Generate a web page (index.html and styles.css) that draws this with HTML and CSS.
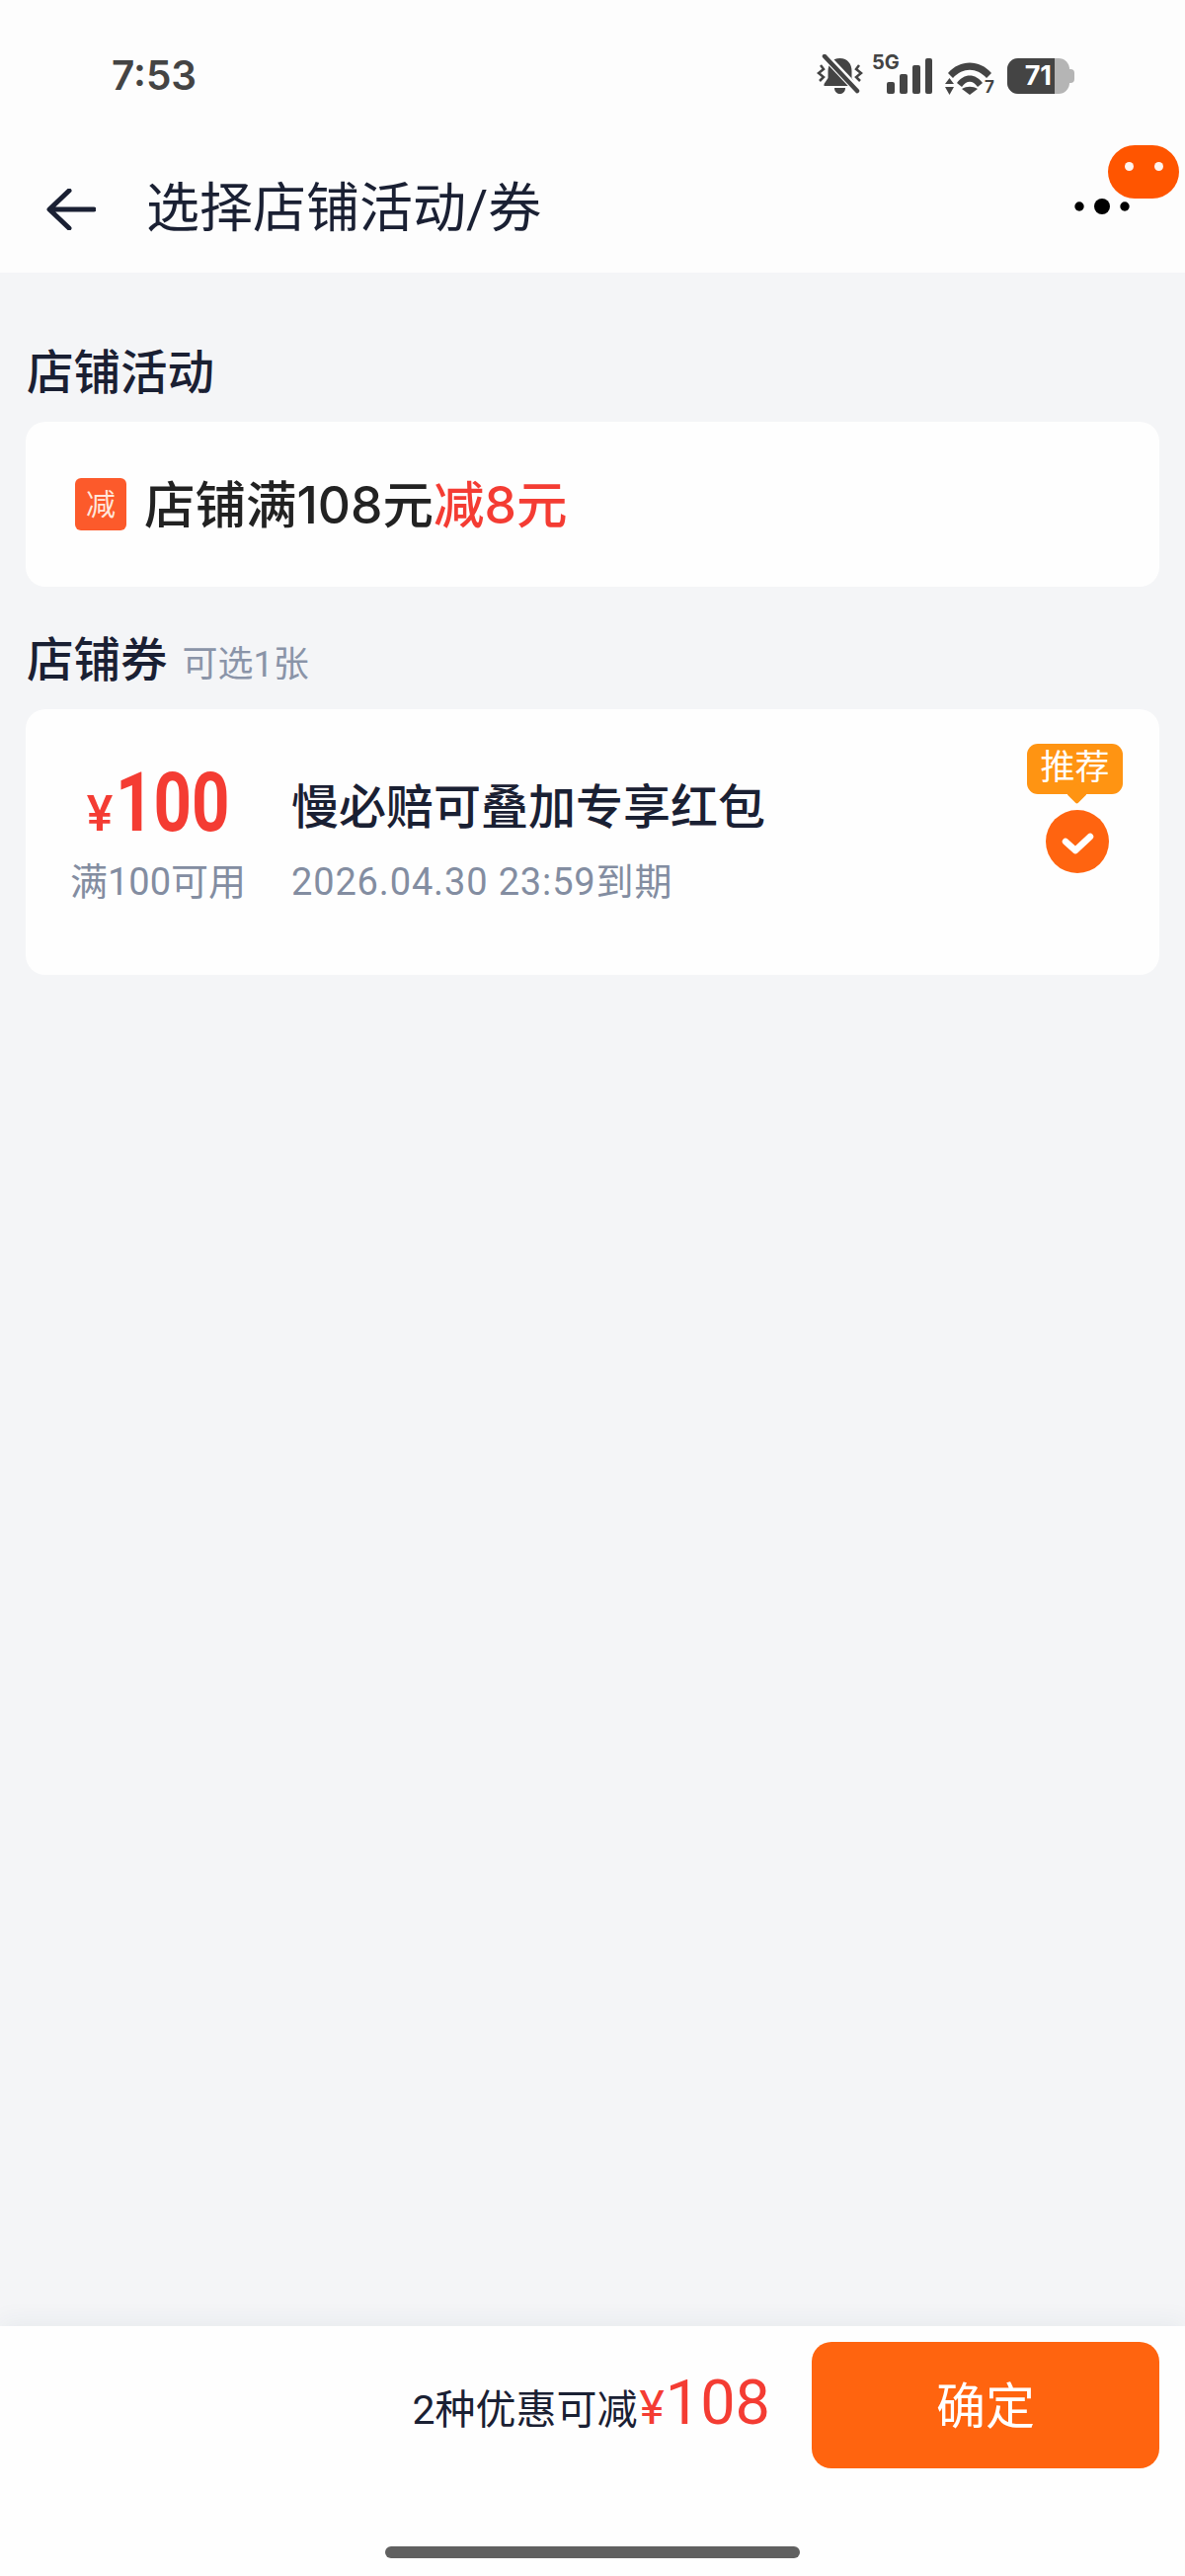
FILE: index.html
```html
<!DOCTYPE html>
<html lang="zh-CN">
<head>
<meta charset="utf-8">
<title>选择店铺活动/券</title>
<link rel="stylesheet" href="styles.css">
</head>
<body>
<div class="page">
  <div class="top">
    <div class="status">
      <span class="time">7:53</span>
      <div class="status-icons">
        <svg class="ic-bell" width="47" height="41" viewBox="0 0 47 41">
          <path d="M23.500 4c-8 0-12 6-12 13v7l-4 6v2h32v-2l-4-6v-7c0-7-4-13-12-13z" fill="#444"/>
          <path d="M18 34h11c0 4-3 6-5.500 6S18 38 18 34z" fill="#444"/>
          <path d="M7 0l35 37" stroke="#fdfdfd" stroke-width="8" fill="none"/>
          <path d="M8 2l33 35" stroke="#444" stroke-width="4.500" stroke-linecap="round" fill="none"/>
          <path d="M4 11l3 4-5 4 5 4-4 4M43 11l-3 4 5 4-5 4 4 4" stroke="#444" stroke-width="2.500" fill="none"/>
        </svg>
        <div class="net">
          <span class="net-label">5G</span>
          <svg width="46" height="36" viewBox="0 0 46 36">
            <rect x="0" y="24" width="8" height="12" rx="2" fill="#444"/>
            <rect x="13" y="16" width="8" height="20" rx="2" fill="#444"/>
            <rect x="26" y="7" width="8" height="29" rx="2" fill="#444"/>
            <rect x="39" y="0" width="7" height="36" rx="2" fill="#444"/>
          </svg>
        </div>
        <div class="wifi">
          <svg width="50" height="37" viewBox="0 0 50 37">
            <path d="M3 15C15 1 35 1 47 15l-5 5C32 9 18 9 8 20z" fill="#444"/>
            <path d="M12 25C19 15 31 15 38 25l-5 4C28 22 22 22 17 29z" fill="#444"/>
            <path d="M25 37l-8-6c5-3 11-3 16 0z" fill="#444"/>
            <path d="M4.500 20l4.500 6H0zM4.500 37L0 29h9z" fill="#444"/>
          </svg>
          <span class="wifi-label">7</span>
        </div>
        <div class="battery">
          <div class="battery-body"><span class="battery-fill">71</span></div>
          <span class="battery-nub"></span>
        </div>
      </div>
    </div>
    <header class="nav">
      <svg class="back" width="50" height="42" viewBox="0 0 50 42">
        <path d="M23 2L3 21l20 19M4 21h44" stroke="#1a2033" stroke-width="5" stroke-linecap="round" stroke-linejoin="round" fill="none"/>
      </svg>
      <h1 class="nav-title">选择店铺活动/券</h1>
      <svg class="more" width="56" height="18" viewBox="0 0 56 18">
        <circle cx="5" cy="9" r="4.700" fill="#000"/>
        <circle cx="28" cy="9" r="8" fill="#000"/>
        <circle cx="51" cy="9" r="4.700" fill="#000"/>
      </svg>
      <div class="robot"><i class="eye"></i><i class="eye"></i></div>
    </header>
  </div>

  <main class="main">
    <h2 class="sec-title first">店铺活动</h2>
    <section class="card promo">
      <span class="promo-tag">减</span>
      <span class="promo-text">店铺满108元<em class="red">减8元</em></span>
    </section>

    <h2 class="sec-title second">店铺券<small class="sec-note">可选1张</small></h2>
    <section class="card coupon">
      <div class="amount"><span class="yen">¥</span><span class="num">100</span></div>
      <div class="coupon-name">慢必赔可叠加专享红包</div>
      <div class="cond">满100可用</div>
      <div class="expire">2026.04.30 23:59到期</div>
      <div class="pick">
        <span class="rec">推荐</span>
        <svg width="64" height="64" viewBox="0 0 64 64">
          <circle cx="32" cy="32" r="32" fill="#ff6410"/>
          <path d="M20 32l10 9 15-14" stroke="#fff" stroke-width="6.500" stroke-linecap="round" stroke-linejoin="round" fill="none"/>
        </svg>
      </div>
    </section>
  </main>

  <footer class="footer">
    <div class="bar">
      <div class="sum"><span class="sum-label">2种优惠可减</span><span class="sum-yen">¥</span><span class="sum-num">108</span></div>
      <button class="ok">确定</button>
    </div>
    <div class="home"></div>
  </footer>
</div>
</body>
</html>
```
FILE: styles.css
```css
* { box-sizing: border-box; margin: 0; padding: 0; }
html, body { width: 1200px; height: 2608px; overflow: hidden; }
body {
  font-family: Roboto, "Noto Sans CJK SC", sans-serif;
  background: #f4f5f7;
  color: #1a2033;
}
.page { width: 1200px; height: 2608px; display: flex; flex-direction: column; }
.top { background: #fdfdfd; height: 276px; }

.status {
  height: 130px;
  padding: 55px 0 0 113px;
  display: flex;
  justify-content: space-between;
  align-items: flex-start;
}
.time {
  font-family: Inter, Roboto, sans-serif;
  font-size: 40.500px;
  line-height: 44px;
  font-weight: 600;
  color: #444;
}
.status-icons { display: flex; align-items: flex-start; padding-right: 112px; }
.ic-bell { display: block; margin-right: 9px; }
.net { position: relative; width: 61px; height: 41px; display: flex; justify-content: flex-end; padding-top: 4px; margin-right: 13px; }
.net-label {
  position: absolute; left: 0; top: -3px;
  font-family: Inter, sans-serif; font-size: 20px; line-height: 22px; font-weight: 700; color: #444;
}
.wifi { position: relative; width: 50px; height: 41px; padding-top: 4px; margin-right: 13px; }
.wifi svg { display: block; }
.wifi-label {
  position: absolute; right: 0; top: 25px;
  font-family: Inter, sans-serif; font-size: 17px; line-height: 16px; font-weight: 700; color: #444;
}
.battery { display: flex; align-items: center; height: 36px; margin-top: 4px; }
.battery-body { width: 63px; height: 36px; background: #b5b5b5; border-radius: 11px; overflow: hidden; }
.battery-fill {
  display: block; width: 48px; height: 36px; background: #444; color: #fff;
  font-family: Inter, sans-serif; font-size: 27px; line-height: 36px; font-weight: 700;
  text-align: right; padding-right: 3px;
}
.battery-nub { width: 5px; height: 14px; background: #b5b5b5; border-radius: 0 4px 4px 0; }

.nav { position: relative; height: 146px; display: flex; align-items: center; padding: 18px 0 0 47px; }
.back { display: block; flex: none; }
.nav-title { margin-left: 51px; font-size: 54px; line-height: 70px; font-weight: 400; color: #1a2033; flex: 1; }
.more { position: absolute; left: 1088px; top: 70px; }
.robot {
  position: absolute; left: 1122px; top: 17px;
  width: 72px; height: 54px; border-radius: 27px; background: #ff5500;
  display: flex; justify-content: center; gap: 21px; padding-top: 17px;
}
.eye { width: 9px; height: 9px; border-radius: 50%; background: #fff4ee; }

.main { flex: 1; padding: 0 26px; }
.sec-title { font-size: 47.500px; line-height: 60px; font-weight: 500; color: #1a2033; display: flex; align-items: baseline; padding-left: 1px; }
.sec-title.first { margin: 72px 0 19px; }
.sec-title.second { margin: 45px 0 15px; }
.sec-note { margin-left: 15px; font-size: 36px; font-weight: 400; color: #8a94a8; }
.card { background: #fefefe; border-radius: 20px; }
.promo { height: 167px; display: flex; align-items: center; padding: 0 50px 0 50px; }
.promo-tag {
  width: 52px; height: 53px; border-radius: 6px; background: #fc5a2b; color: #ffe7dc;
  font-size: 30px; line-height: 53px; text-align: center; flex: none;
}
.promo-text { margin-left: 18px; font-family: Inter, "Noto Sans CJK SC", sans-serif; font-size: 51.500px; line-height: 70px; font-weight: 500; color: #222; }
.red { font-style: normal; color: #f43c33; }

.coupon {
  position: relative; height: 269px;
  display: grid;
  grid-template-columns: 228px auto;
  grid-template-rows: 80px 50px;
  row-gap: 10px;
  column-gap: 21px;
  align-items: center;
  align-content: start;
  justify-content: start;
  padding: 60px 0 0 20px;
}
.amount { display: flex; align-items: baseline; justify-content: center; color: #f43c33; line-height: 80px; }
.yen { font-size: 50px; font-weight: 500; margin-right: 3px; }
.num { display: inline-block; width: 115px; font-size: 84px; font-weight: 700; transform: scaleX(.8); transform-origin: left center; white-space: nowrap; }
.coupon-name { font-size: 48px; line-height: 60px; font-weight: 500; color: #1a2033; }
.cond { font-size: 38px; line-height: 50px; text-align: center; color: #838da1; white-space: nowrap; }
.expire { font-size: 38px; line-height: 50px; color: #838da1; white-space: nowrap; letter-spacing: .85px; }
.pick { position: absolute; right: 37px; top: 35px; width: 97px; display: flex; flex-direction: column; align-items: center; }
.pick svg { display: block; margin: 16px 0 0 5px; }
.rec {
  position: relative; display: block; width: 97px; height: 51px; border-radius: 11px; background: #ff9412;
  color: #fff; font-size: 35px; line-height: 50px; text-align: center;
}
.rec::after {
  content: ""; position: absolute; left: 43px; top: 43px; width: 15px; height: 15px;
  background: #ff9412; transform: rotate(45deg); border-radius: 2px;
}

.footer { position: relative; height: 253px; background: #fefefe; box-shadow: 0 -6px 22px rgba(0, 50, 70, .05); }
.bar { height: 223px; display: flex; align-items: flex-start; justify-content: flex-end; padding: 16px 26px 0 0; }
.sum { display: flex; align-items: baseline; margin-top: 27px; line-height: 70px; color: #1a2033; }
.sum-label { font-size: 41px; }
.sum-yen { font-size: 48px; color: #f43c33; margin-left: 2px; }
.sum-num { font-size: 63px; color: #f43c33; margin-left: 1px; }
.ok {
  width: 352px; height: 128px; margin-left: 42px; border: 0; border-radius: 20px; padding-bottom: 6px;
  background: #ff640f; color: #fff; font-family: inherit; font-size: 50px; font-weight: 400;
}
.home { width: 420px; height: 12px; margin-left: 390px; border-radius: 6px; background: #606060; }
```
